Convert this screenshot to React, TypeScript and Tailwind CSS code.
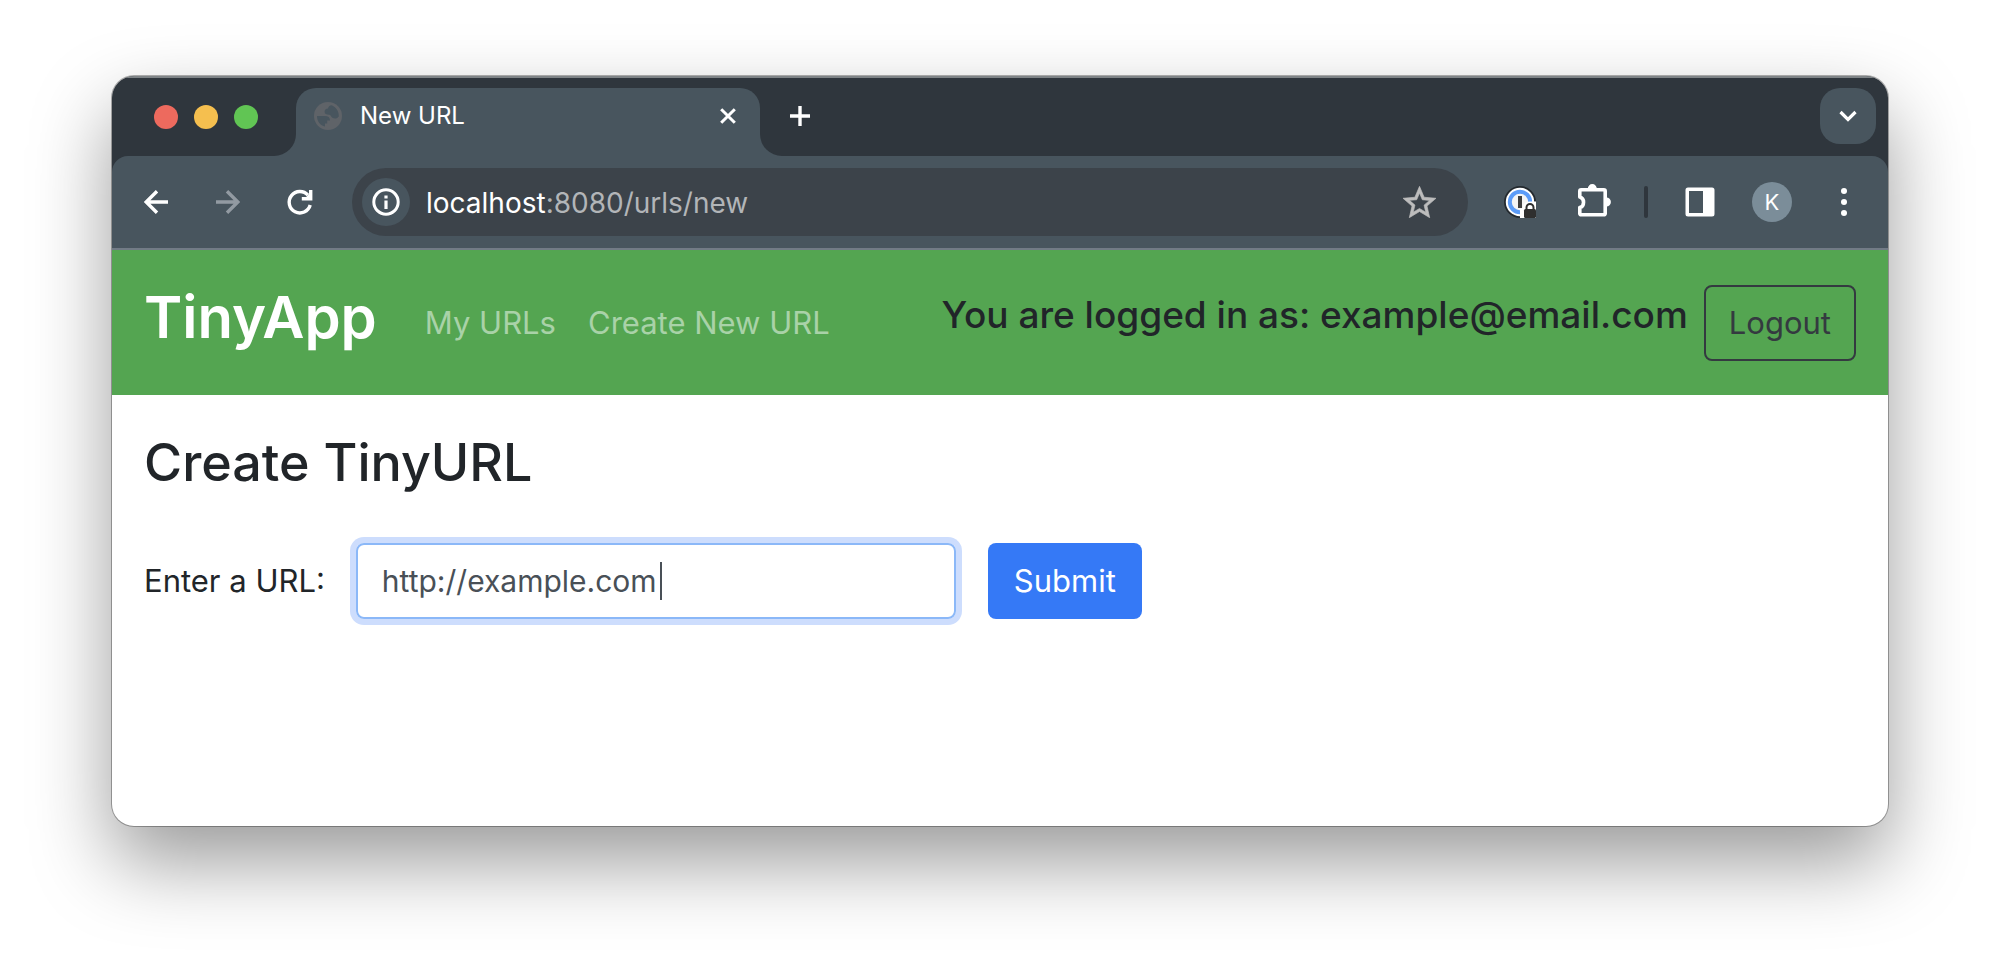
import React from "react";

function TrafficLights() {
  return (
    <div className="flex h-full items-center gap-4 pl-[42px]">
      <button aria-label="Close window" className="size-6 rounded-full bg-[#ed6a5e]" />
      <button aria-label="Minimise window" className="size-6 rounded-full bg-[#f5bf4f]" />
      <button aria-label="Zoom window" className="size-6 rounded-full bg-[#61c554]" />
    </div>
  );
}

function GlobeIcon() {
  return (
    <svg viewBox="0 0 28 28" className="size-7 shrink-0" aria-hidden="true">
      <circle cx="14" cy="14" r="14" fill="#5f6368" />
      <path
        d="M17.500 3.200c-1.800.3-3.200 1.300-3.500 3.200-2.400.2-3.400 1.500-3.400 3.400 0 2.200 1.600 3 4.600 3 .9 0 1.600.8 2.200 2 .8 1.500 2.600 1.800 4.800 1.600 1.200-.1 1.700-1 2.600-1.800C25 9.200 22 4.800 17.500 3.200z"
        fill="#48555e"
      />
      <path
        d="M3 14h7.800c3.400 0 5.200 1.400 5.200 4.400h-2.800v3.200H11v3C6.400 23.600 3 19.500 3 14z"
        fill="#48555e"
      />
    </svg>
  );
}

function TabStrip() {
  return (
    <div className="flex h-20 border-t-2 border-[#7f8487] bg-[#2f363d]">
      <TrafficLights />
      <div className="flex items-end pl-4">
        <div className="h-[22px] w-[22px] bg-[#48555e]">
          <div className="h-full rounded-br-[22px] bg-[#2f363d]" />
        </div>
        <div className="flex h-[68px] w-[464px] items-center rounded-t-[20px] bg-[#48555e] pr-6 pb-3 pl-[18px]">
          <GlobeIcon />
          <span className="ml-[18px] flex-1 text-[24px] leading-8 text-white">New URL</span>
          <button aria-label="Close tab" className="grid size-4 place-items-center">
            <svg viewBox="0 0 16 16" className="size-4" stroke="#fff" strokeWidth="3" aria-hidden="true">
              <path d="M1.200 1.200l13.600 13.600M14.800 1.200L1.200 14.800" />
            </svg>
          </button>
        </div>
        <div className="h-[22px] w-[22px] bg-[#48555e]">
          <div className="h-full rounded-bl-[22px] bg-[#2f363d]" />
        </div>
      </div>
      <div className="flex flex-1 items-center justify-between pr-3 pb-0.5 pl-2">
        <button aria-label="New tab">
          <svg viewBox="0 0 20 20" className="size-5" stroke="#fff" strokeWidth="3.400" aria-hidden="true">
            <path d="M10 0v20M0 10h20" />
          </svg>
        </button>
        <button aria-label="Search tabs" className="grid size-14 place-items-center rounded-[20px] bg-[#48555e]">
          <svg viewBox="0 0 18 12" className="h-3 w-[18px]" fill="none" stroke="#fff" strokeWidth="3.200" aria-hidden="true">
            <path d="M1.500 2L9 9.400 16.500 2" />
          </svg>
        </button>
      </div>
    </div>
  );
}

function Toolbar() {
  return (
    <div className="bg-[#2f363d]">
      <div className="flex h-[94px] items-center rounded-t-2xl border-b-2 border-[#727b86] bg-[#48555e] pr-[38px] pl-8">
        <button aria-label="Back">
          <svg viewBox="0 0 24 24" className="size-6" fill="none" stroke="#fff" strokeWidth="3.400" aria-hidden="true">
            <path d="M24 12H2.500M13 1.200L2.200 12 13 22.800" />
          </svg>
        </button>
        <button aria-label="Forward" className="ml-12">
          <svg viewBox="0 0 24 24" className="size-6" fill="none" stroke="#929aa2" strokeWidth="3.400" aria-hidden="true">
            <path d="M0 12h21.500M11 1.200L21.800 12 11 22.800" />
          </svg>
        </button>
        <button aria-label="Reload" className="ml-[46px]">
          <svg viewBox="0 0 28 28" className="size-7" fill="none" aria-hidden="true">
            <path d="M24.200 17A10.700 10.700 0 1 1 22 7.200" stroke="#fff" strokeWidth="3.400" />
            <path d="M23 2h3.400v10.400H15.800V9h4.400l2.800-3z" fill="#fff" />
          </svg>
        </button>
        <div className="ml-[38px] flex h-[68px] flex-1 items-center rounded-full bg-[#3c434a] pr-8 pl-[10px]">
          <button aria-label="Site information" className="grid size-12 place-items-center rounded-full bg-[#48555e]">
            <svg viewBox="0 0 28 28" className="size-7" aria-hidden="true">
              <circle cx="14" cy="14" r="12.200" fill="none" stroke="#fff" strokeWidth="3" />
              <path d="M12.400 12.500h3.200V21h-3.200zM12.400 7.500h3.200v3h-3.200z" fill="#fff" />
            </svg>
          </button>
          <div className="ml-4 flex-1 pt-0.5 text-[28px] leading-9 text-[#b2b5b8]">
            <span className="text-white">localhost</span>:8080/urls/new
          </div>
          <button aria-label="Bookmark this tab">
            <svg viewBox="2 2 20 19" className="h-8 w-[33px]" fill="#bdbdbd" stroke="#bdbdbd" strokeWidth="0.400" aria-hidden="true">
              <path d="M22 9.240l-7.190-.62L12 2 9.190 8.630 2 9.240l5.460 4.730L5.820 21 12 17.270 18.180 21l-1.630-7.030L22 9.240zM12 15.400l-3.760 2.270 1-4.280-3.320-2.880 4.380-.38L12 6.100l1.710 4.040 4.380.38-3.320 2.880 1 4.280L12 15.400z" />
            </svg>
          </button>
        </div>
        <button aria-label="Password manager" className="ml-9">
          <svg viewBox="0 0 32 32" className="size-8" aria-hidden="true">
            <circle cx="16" cy="16" r="16" fill="#23292e" />
            <circle cx="16" cy="16" r="14.200" fill="#fff" />
            <circle cx="16" cy="16" r="10.200" fill="#f4f4f4" stroke="#5c9cf8" strokeWidth="4" />
            <rect x="14" y="10" width="4" height="12" fill="#3f3f3f" />
            <path d="M16 32v-9c2 0 3-1 3-3 0-2 3-4.500 7-4.500h6V32z" fill="#fff" />
            <rect x="20" y="23" width="12" height="9" rx="1.500" fill="#2f2f2f" />
            <path d="M22.500 24v-2.500a3.500 3.500 0 0 1 7 0V24" fill="none" stroke="#2f2f2f" strokeWidth="2" />
          </svg>
        </button>
        <button aria-label="Extensions" className="ml-[41px] pb-1">
          <svg viewBox="0 0 34 34" className="size-[34px]" aria-hidden="true">
            <path
              d="M2.800 8.200a1.400 1.400 0 0 1 1.400-1.400H26.800a1.400 1.400 0 0 1 1.400 1.400V30.400a1.400 1.400 0 0 1-1.400 1.400H4.200a1.400 1.400 0 0 1-1.400-1.400V24.500c5-1.200 5-9.400 0-10.600z"
              fill="none"
              stroke="#fff"
              strokeWidth="3.600"
              strokeLinejoin="round"
            />
            <path d="M10.800 5.600a4.500 4.500 0 0 1 9 0zM29.400 14.500a4.500 4.500 0 0 1 0 9z" fill="#fff" />
          </svg>
        </button>
        <div className="ml-[33px] h-8 w-1 rounded-full bg-[#2f363d]" />
        <button aria-label="Side panel" className="ml-[37px]">
          <svg viewBox="0 0 30 30" className="size-[30px]" aria-hidden="true">
            <path
              fillRule="evenodd"
              d="M3 .5h24a2.500 2.500 0 0 1 2.500 2.500v24a2.500 2.500 0 0 1-2.500 2.500H3A2.500 2.500 0 0 1 .5 27V3A2.500 2.500 0 0 1 3 .5zM4 4v22h14V4z"
              fill="#fff"
            />
          </svg>
        </button>
        <button
          aria-label="Profile"
          className="ml-[37px] grid size-10 place-items-center rounded-full bg-[#7b8d99] text-[22px] leading-10 text-white"
        >
          K
        </button>
        <button aria-label="Menu" className="ml-[46px]">
          <svg viewBox="0 0 12 28" className="h-7 w-3" fill="#fff" aria-hidden="true">
            <circle cx="6" cy="3" r="3" />
            <circle cx="6" cy="14" r="3" />
            <circle cx="6" cy="25" r="3" />
          </svg>
        </button>
      </div>
    </div>
  );
}

function NavBar() {
  return (
    <nav className="flex items-start bg-[#54a551] px-8 pt-[35px] pb-[34px]">
      <a href="#home" className="text-[58px] leading-[64px] font-semibold text-white">
        TinyApp
      </a>
      <div className="ml-12 flex gap-8 pt-5 text-[31px] leading-9 text-[#a9d2a8]">
        <a href="#urls">My URLs</a>
        <a href="#new">Create New URL</a>
      </div>
      <div className="ml-auto flex items-start gap-4">
        <h2 className="pt-1.5 text-[37px] leading-[48px] font-medium text-[#212529]">
          You are logged in as: example@email.com
        </h2>
        <button className="h-[76px] rounded-lg border-2 border-[#343a40] px-[23px] text-[31px] leading-9 text-[#343a40]">
          Logout
        </button>
      </div>
    </nav>
  );
}

export default function App() {
  return (
    <div className="min-h-screen bg-white px-28 pt-[76px] pb-[148px] font-['Inter',sans-serif]">
      <div className="flex min-h-[750px] flex-col overflow-hidden rounded-[22px] bg-white shadow-[0_0_0_1px_rgba(0,0,0,0.3),0_36px_80px_rgba(0,0,0,0.4)]">
        <TabStrip />
        <Toolbar />
        <NavBar />
        <main className="px-8 pt-[34px]">
          <h1 className="text-[52px] leading-[68px] font-medium text-[#212529]">Create TinyURL</h1>
          <form className="mt-[46px] flex items-center" onSubmit={(e) => e.preventDefault()}>
            <label htmlFor="longURL" className="text-[31px] leading-9 text-[#212529]">
              Enter a URL:
            </label>
            <div className="relative ml-[31px]">
              <input
                id="longURL"
                type="text"
                defaultValue="http://example.com"
                className="h-[76px] w-[600px] rounded-lg border-2 border-[#8bb8f8] px-6 text-[30px] text-[#495057] ring-[6px] ring-[#cdddfd] outline-none"
              />
              <span className="absolute top-[19px] left-[304px] h-[38px] w-0.5 bg-[#495057]" />
            </div>
            <button className="ml-8 h-[76px] rounded-lg bg-[#3579f6] px-[26px] text-[31px] text-white">Submit</button>
          </form>
        </main>
      </div>
    </div>
  );
}
